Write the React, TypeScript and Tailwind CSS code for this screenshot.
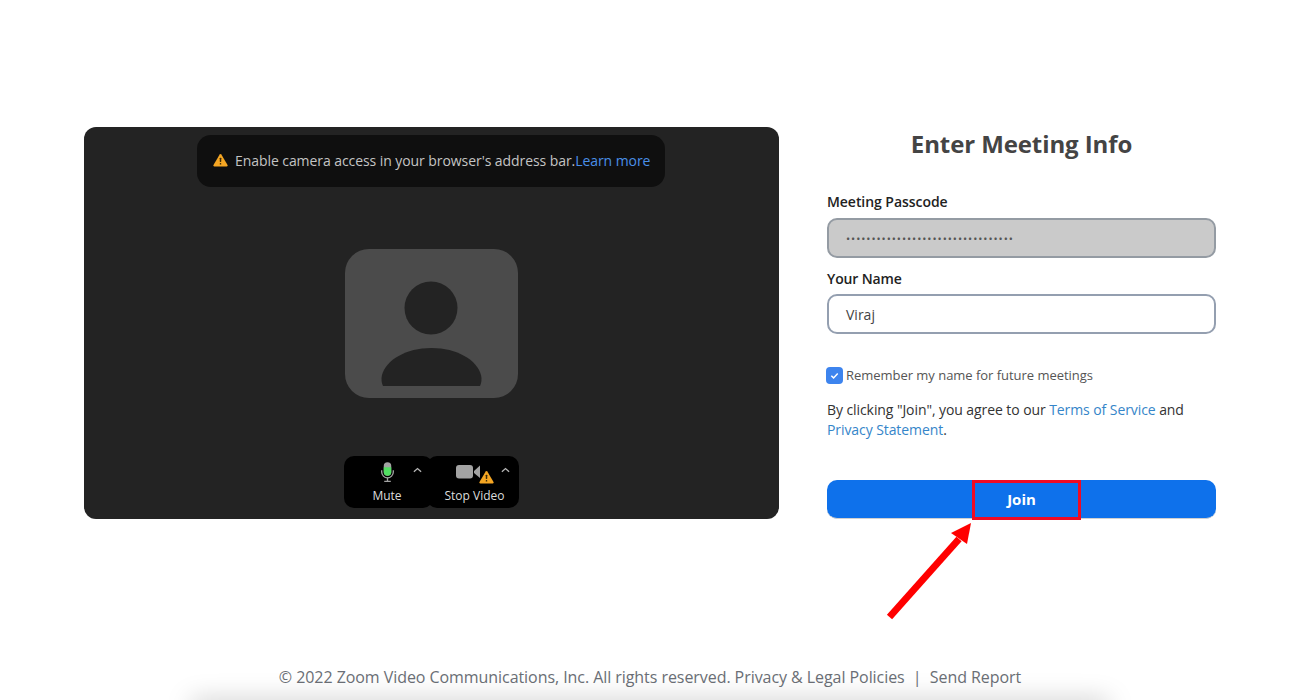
import React from "react";

function Warn({ className }: { className?: string }) {
  return (
    <svg viewBox="0 0 16 14" className={className}>
      <path d="M8 .6c.4 0 .7.2.9.5l6.6 11.2c.4.7-.1 1.5-.9 1.5H1.4c-.8 0-1.3-.8-.9-1.5L7.1 1.1C7.3.8 7.6.6 8 .6z" fill="#f5a623" />
      <rect x="7.2" y="4.6" width="1.6" height="4.6" rx=".5" fill="#3a2a08" />
      <rect x="7.2" y="10.2" width="1.6" height="1.7" rx=".5" fill="#3a2a08" />
    </svg>
  );
}

function Caret() {
  return (
    <svg viewBox="0 0 10 6" className="w-[9px] h-[6px]">
      <path d="M1 5l4-3.6L9 5" fill="none" stroke="#b5b5b5" strokeWidth="1.5" />
    </svg>
  );
}

export default function App() {
  return (
    <div
      className="relative h-[700px] w-[1300px] overflow-hidden bg-white flex flex-col"
      style={{ fontFamily: '"Open Sans", "Noto Sans", sans-serif' }}
    >
      <div className="flex pt-[127px] pl-[84px] gap-[48px]">
        {/* video panel */}
        <div className="relative w-[695px] h-[392px] rounded-[12px] bg-[#232323] flex flex-col items-center">
          <div className="mt-[8px] ml-[-1px] w-[468px] h-[52px] rounded-[14px] bg-[#0f0f0f] flex items-center pl-[16px]">
            <Warn className="w-[15px] h-[14px] mr-[7px] mb-[3px]" />
            <span className="text-[14px] leading-[20px] text-[#c4c4c4] whitespace-nowrap tracking-[-0.07px]">
              Enable camera access in your browser's address bar.
            </span>
            <span className="text-[14px] leading-[20px] text-[#4a8fe8] whitespace-nowrap tracking-[-0.07px]">Learn more</span>
          </div>

          <div className="mt-[62px] w-[173px] h-[149px] rounded-[24px] bg-[#4b4b4b] flex flex-col items-center">
            <svg viewBox="0 0 173 149" className="w-[173px] h-[149px]">
              <circle cx="86" cy="59" r="26.5" fill="#232323" />
              <path d="M38 137c-1.500-3-2-7-1-11 4-15 24-27 49.500-27s45.500 12 49.500 27c1 4 .5 8-1 11z" fill="#232323" />
            </svg>
          </div>

          <div className="mt-[58px] w-[175px] h-[52px] ml-[-1px] flex">
            <div className="relative w-[89px] h-[52px] pr-[2px] rounded-[10px] bg-black flex flex-col items-center">
              <svg viewBox="0 0 16 24" className="w-[15px] h-[23px] mt-[5px]">
                <rect x="4" y="1" width="8" height="14.500" rx="4" fill="#a3a3a3" />
                <path d="M4 6.500h8v5a4 4 0 0 1-8 0z" fill="#52de62" />
                <path d="M1.800 9.500v2a6.200 6.200 0 0 0 12.400 0v-2" fill="none" stroke="#a3a3a3" strokeWidth="1.400" />
                <path d="M8 17.500V21M4.500 21.500h7" stroke="#a3a3a3" strokeWidth="1.400" fill="none" />
              </svg>
              <span className="text-[12px] leading-[16px] text-[#dcdcdc] mt-[4px]">Mute</span>
              <span className="absolute top-[11px] left-[69px] flex"><Caret /></span>
            </div>
            <div className="relative w-[92px] ml-[-6px] h-[52px] pl-[4px] rounded-[10px] bg-black flex flex-col items-center">
              <svg viewBox="0 0 40 22" className="w-[40px] h-[22px] mt-[6px]">
                <rect x="1" y="3" width="17" height="13.500" rx="3" fill="#a3a3a3" />
                <path d="M19 9l6-5.500v12.500l-6-5z" fill="#a3a3a3" />
              </svg>
              <span className="text-[12px] leading-[16px] text-[#dcdcdc] mt-[4px] whitespace-nowrap">Stop Video</span>
              <span className="absolute top-[11px] left-[74px] flex"><Caret /></span>
              <Warn className="absolute top-[14px] left-[52px] w-[15px] h-[14px]" />
            </div>
          </div>
        </div>

        {/* form */}
        <div className="w-[389px] flex flex-col">
          <h1 className="h-[34px] text-[24px] leading-[34px] font-bold text-[#444] text-center tracking-[-0.1px]">Enter Meeting Info</h1>
          <label className="mt-[31px] text-[14px] leading-[20px] font-semibold text-[#222] tracking-[-0.05px]">Meeting Passcode</label>
          <div className="mt-[6px] h-[40px] rounded-[10px] border-2 border-[#949ba3] bg-[#cacaca] flex items-center pl-[17px] text-[#555]">
            <span className="text-[11px] tracking-[0.95px] leading-none whitespace-nowrap">•••••••••••••••••••••••••••••••••</span>
          </div>
          <label className="mt-[11px] text-[14px] leading-[20px] font-semibold text-[#222] tracking-[-0.15px]">Your Name</label>
          <div className="mt-[5px] h-[40px] rounded-[10px] border-2 border-[#949fb0] bg-white flex items-center pl-[17px] text-[14px] text-[#444]">
            Viraj
          </div>
          <div className="mt-[32px] ml-[-1px] flex items-center h-[18px]">
            <span className="w-[17px] h-[17px] rounded-[4px] bg-[#3d84ee] flex items-center justify-center">
              <svg viewBox="0 0 12 12" className="w-[11px] h-[11px]">
                <path d="M2.500 6.200l2.500 2.400 4.500-4.800" fill="none" stroke="white" strokeWidth="1.600" />
              </svg>
            </span>
            <span className="ml-[3px] text-[13px] leading-[18px] text-[#555] whitespace-nowrap tracking-[-0.03px]">Remember my name for future meetings</span>
          </div>
          <p className="mt-[16px] text-[14px] leading-[20px] text-[#333] tracking-[-0.08px]">
            By clicking "Join", you agree to our <span className="text-[#3585c9]">Terms of Service</span> and
            <br />
            <span className="text-[#3585c9]">Privacy Statement</span>.
          </p>
          <button className="mt-[40px] h-[39px] rounded-[10px] bg-[#0e71eb] text-white text-[15px] font-bold border-b border-[#d0d0d0]">
            Join
          </button>
        </div>
      </div>

      <footer className="mt-[147px] text-center text-[16px] leading-[22px] text-[#6b6f76] tracking-[-0.06px] whitespace-nowrap">
        © 2022 Zoom Video Communications, Inc. All rights reserved. Privacy &amp; Legal Policies &nbsp;|&nbsp; Send Report
      </footer>

      {/* annotation overlays */}
      <div className="absolute left-[972px] top-[480px] w-[109px] h-[40px] border-[3px] border-[#f00a23]" />
      <svg className="absolute left-[880px] top-[515px] w-[100px] h-[110px]" viewBox="0 0 100 110">
        <path d="M9.500 102L79 24" stroke="#ff0000" strokeWidth="7" fill="none" />
        <path d="M91 8L71 18l16 11z" fill="#ff0000" />
      </svg>
      <div className="absolute left-[190px] top-[699px] w-[920px] h-[16px] rounded-full bg-black/20 blur-[12px]" />
    </div>
  );
}
